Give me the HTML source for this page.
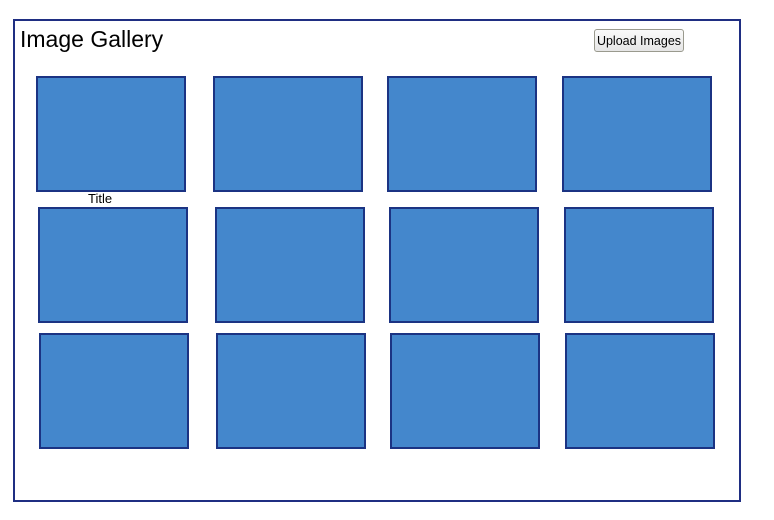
<!DOCTYPE html>
<html><head><style>
body{margin:0;width:774px;height:520px;background:#fff;font-family:"Liberation Sans",sans-serif;position:relative;overflow:hidden}
.frame{position:absolute;left:13px;top:19px;width:724px;height:479px;border:2px solid #1f2e82}
h1{position:absolute;left:20px;top:26px;margin:0;font-size:23px;font-weight:normal;color:#000;line-height:27px}
.btn{position:absolute;left:594px;top:29px;width:88px;height:21px;border:1px solid #9a9a8e;border-radius:3px;background:linear-gradient(#fafafa,#e6e6e6);font-size:12.5px;line-height:22px;text-align:center;color:#000;white-space:nowrap}
.t{position:absolute;width:146px;height:112px;background:#4487cc;border:2px solid #1b3383}
.title{position:absolute;left:88px;top:191px;font-size:13px;line-height:15px}
</style></head><body>
<div class="frame"></div>
<h1>Image Gallery</h1>
<div class="btn">Upload Images</div>
<div class="t" style="left:36px;top:76px"></div>
<div class="t" style="left:213px;top:76px"></div>
<div class="t" style="left:387px;top:76px"></div>
<div class="t" style="left:562px;top:76px"></div>
<div class="title">Title</div>
<div class="t" style="left:38px;top:207px"></div>
<div class="t" style="left:215px;top:207px"></div>
<div class="t" style="left:389px;top:207px"></div>
<div class="t" style="left:564px;top:207px"></div>
<div class="t" style="left:39px;top:333px"></div>
<div class="t" style="left:216px;top:333px"></div>
<div class="t" style="left:390px;top:333px"></div>
<div class="t" style="left:565px;top:333px"></div>
</body></html>
